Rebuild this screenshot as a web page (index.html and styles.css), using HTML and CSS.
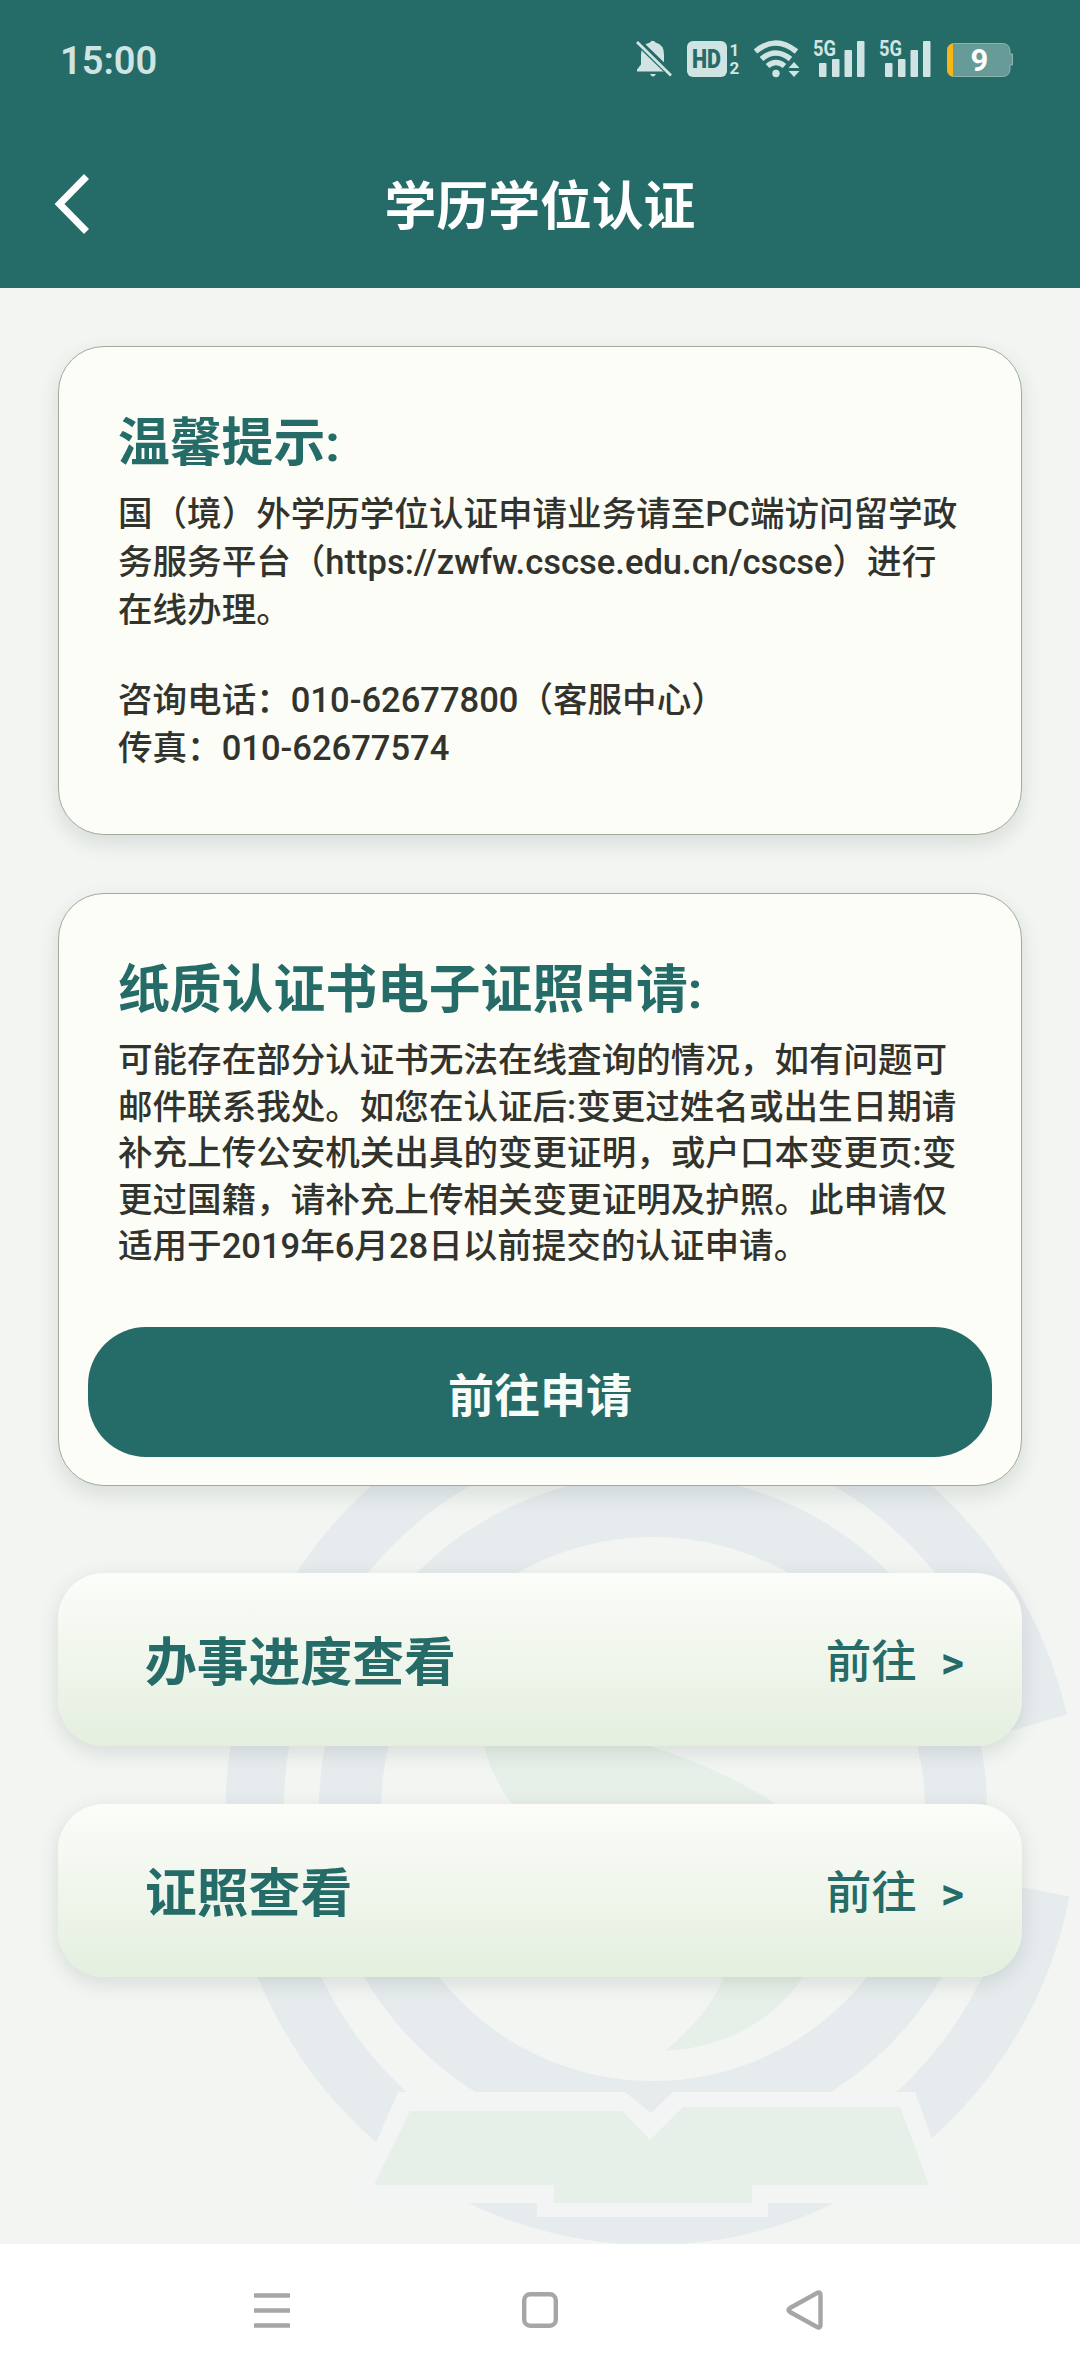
FILE: index.html
```html
<!DOCTYPE html>
<html lang="zh-CN">
<head>
    <meta charset="UTF-8">
    <meta name="viewport" content="width=device-width, initial-scale=1.0">
    <title>学历学位认证</title>
    <link rel="stylesheet" href="styles.css">
</head>
<body>
    <header>
        <div class="status-bar">
            <span class="time">15:00</span>
            <!-- bell, HD, wifi, two 5G signals, battery -->
            <svg class="status-icons" width="378" height="56" viewBox="636 31 378 56">
                <g fill="#d0e4e4">
                    <path d="M637 71.500v-2l4-5v-10q0-10 9-12a3 3 0 0 1 5.500 0q8.500 2 8.500 12v8l5 7v2z"/>
                    <path d="M650 74h6q-3 5-6 0z"/>
                    <path d="M638 42l34 33" stroke="#256b67" stroke-width="7"/>
                    <path d="M637 42l34 33.500" stroke="#d0e4e4" stroke-width="2.800"/>
                    <rect x="687" y="41" width="40" height="36" rx="6"/>
                    <text class="hd" x="692" y="68" textLength="29" lengthAdjust="spacingAndGlyphs">HD</text>
                    <text class="sim" x="729.500" y="56">1</text>
                    <text class="sim" x="729.500" y="74">2</text>
                    <g fill="none" stroke="#d0e4e4" stroke-width="5.500">
                        <path d="M755.500 51.500q20-17 41 0"/>
                        <path d="M761.500 59q14-12 29 0"/>
                        <path d="M767.500 66q8.500-7 17 0"/>
                    </g>
                    <circle cx="776" cy="73.500" r="3.700"/>
                    <path d="M788.500 68l5.500-6 5.500 6zM788.500 71l5.500 6 5.500-6z"/>
                    <g id="signal">
                        <text class="net" x="813" y="56" textLength="23" lengthAdjust="spacingAndGlyphs">5G</text>
                        <rect x="819" y="63" width="7.500" height="14" rx="1"/>
                        <rect x="832" y="59" width="7.500" height="18" rx="1"/>
                        <rect x="844.500" y="50" width="7.500" height="27" rx="1"/>
                        <rect x="857" y="41" width="7.500" height="36" rx="1"/>
                    </g>
                    <use href="#signal" x="66"/>
                </g>
                <path d="M955 43.500h47.500q6.500 0 7.500 6.500v4h2.500v11h-2.500v5q-1 6.500-7.500 6.500h-48q-7 0-7-7v-19q0-7 7.500-7z" fill="#679b98" stroke="#8bb4b1"/>
                <path d="M953 43.500v33q-6-1-6-8v-17q0-7 6-8z" fill="#f8b616"/>
                <text class="level" x="979.500" y="71" text-anchor="middle">9</text>
            </svg>
        </div>
        <div class="title-bar">
            <svg class="back" width="36" height="62" viewBox="0 0 36 62">
                <path d="M32.500 3.500L5.500 31l27 27.500" fill="none" stroke="#fff" stroke-width="7"/>
            </svg>
            <h1>学历学位认证</h1>
        </div>
    </header>

    <main>
        <svg class="watermark" width="860" height="870" viewBox="220 1374 860 870">
            <g fill="none" stroke="#e6ebed">
                <path d="M1038 1719A397 404 0 1 0 1041 1891" stroke-width="58"/>
                <circle cx="653" cy="1809" r="303" stroke-width="62"/>
            </g>
            <path d="M919 1758L1068 1714L1030 1660L919 1690z" fill="#e6ebed"/>
            <path d="M484 1744Q490 1775 512 1804L776 1804Q720 1768 650 1746z" fill="#e6efe8"/>
            <path d="M808 1970Q760 2045 665 2051Q720 2005 729 1960z" fill="#e6efe8"/>
            <path d="M350 2203L398 2092H625L651 2113L673 2092H915L955 2203H768V2217H537V2203z" fill="#f2f5f3"/>
            <path d="M374 2185L410 2111H622L650 2140L683 2107H900L929 2185H752V2203H554V2185z" fill="#e6efe8"/>
        </svg>

        <section class="card tips">
            <h2>温馨提示:</h2>
            <p>国（境）外学历学位认证申请业务请至PC端访问留学政<br>务服务平台（https://zwfw.cscse.edu.cn/cscse）进行<br>在线办理。</p>
            <p>咨询电话：010-62677800（客服中心）<br>传真：010-62677574</p>
        </section>

        <section class="card apply">
            <h2>纸质认证书电子证照申请:</h2>
            <p>可能存在部分认证书无法在线査询的情况，如有问题可<br>邮件联系我处。如您在认证后:变更过姓名或出生日期请<br>补充上传公安机关出具的变更证明，或户口本变更页:变<br>更过国籍，请补充上传相关变更证明及护照。此申请仅<br>适用于2019年6月28日以前提交的认证申请。</p>
            <button class="btn">前往申请</button>
        </section>

        <a class="row" href="#">
            <strong>办事进度查看</strong>
            <span>前往<i>&gt;</i></span>
        </a>
        <a class="row" href="#">
            <strong>证照查看</strong>
            <span>前往<i>&gt;</i></span>
        </a>
    </main>

    <nav>
        <svg width="36" height="40" viewBox="0 0 36 40">
            <path d="M0 5.500h36M0 20.500h36M0 35.500h36"/>
        </svg>
        <svg width="40" height="40" viewBox="0 0 40 40">
            <rect x="6.200" y="4.200" width="31.600" height="31.600" rx="6"/>
        </svg>
        <svg width="38" height="40" viewBox="0 0 38 40">
            <path d="M31.500 2.800Q34.500 1.500 34.500 5v30q0 3.500-3 2.200L4 22Q1 20 4 18z"/>
        </svg>
    </nav>
</body>
</html>
```

FILE: styles.css
```css
body {
    font-family: Roboto, "Noto Sans CJK SC", sans-serif;
    background-color: #f2f5f2;
    color: #33332d;
    margin: 0;
    padding: 0;
}

header {
    height: 288px;
    background: #256b67;
    color: white;
}

.status-bar {
    display: flex;
    justify-content: space-between;
    align-items: center;
    height: 118px;
    padding: 0 66px 0 60px;
    box-sizing: border-box;
}

.time {
    color: #d0e4e4;
    font-size: 38px;
    font-weight: 600;
    margin-top: 3px;
}

.status-icons text {
    font-family: Roboto, sans-serif;
    font-weight: 700;
}

.status-icons .hd {
    font-size: 25px;
    font-weight: 900;
    fill: #256b67;
}

.status-icons .sim {
    font-size: 17px;
}

.status-icons .net {
    font-size: 22px;
}

.status-icons .level {
    font-size: 31px;
    fill: white;
}

.title-bar {
    display: grid;
    grid-template-columns: 1fr auto 1fr;
    align-items: center;
    height: 172px;
    padding: 0 54px;
}

h1 {
    margin: 0;
    padding-top: 7px;
    font-size: 51.8px;
    line-height: 72px;
}

main {
    position: relative;
    height: 1956px;
    padding: 58px 58px 0;
    box-sizing: border-box;
}

.watermark {
    position: absolute;
    right: 0;
    bottom: 0;
}

.card {
    position: relative;
    box-sizing: border-box;
    margin-bottom: 58px;
    border: 1px solid #a3aa9b;
    border-radius: 46px;
    background: #fcfdf6;
    box-shadow: 0 8px 20px rgba(60, 80, 70, 0.14);
}

.tips {
    height: 489px;
    padding: 61px 59px 0;
}

.apply {
    height: 593px;
    padding: 61px 29px 0;
    margin-bottom: 87px;
}

h2 {
    margin: 0 0 10px;
    color: #256b67;
    font-size: 51.8px;
    line-height: 72px;
}

.card p {
    margin: 0 0 41px;
    font-size: 34.55px;
    font-weight: 500;
    line-height: 48.2px;
    white-space: nowrap;
}

.apply h2, .apply p {
    padding-left: 30px;
}

.apply p {
    line-height: 46.6px;
    margin-bottom: 57px;
}

.btn {
    display: block;
    width: 100%;
    height: 130px;
    border: none;
    border-radius: 58px;
    background: #256b67;
    color: #f8fcf8;
    font: inherit;
    font-size: 46px;
    font-weight: 700;
}

.row {
    position: relative;
    display: flex;
    justify-content: space-between;
    align-items: center;
    height: 173px;
    margin-bottom: 58px;
    padding: 0 58px 3px 87px;
    border-radius: 46px;
    background: linear-gradient(#fcfdf9, #e4efdf);
    box-shadow: 0 6px 20px rgba(60, 80, 70, 0.15);
    box-sizing: border-box;
    color: #256b67;
    text-decoration: none;
}

.row strong {
    font-size: 51.8px;
}

.row span {
    font-size: 45.5px;
    font-weight: 500;
}

.row i {
    margin-left: 24px;
    font-size: 45px;
    font-style: normal;
    font-weight: 600;
}

nav {
    display: flex;
    justify-content: space-between;
    height: 132px;
    padding: 46px 256px 0 254px;
    box-sizing: border-box;
    background: white;
}

nav svg {
    fill: none;
    stroke: #a6a6a6;
    stroke-width: 4.4;
}
```
